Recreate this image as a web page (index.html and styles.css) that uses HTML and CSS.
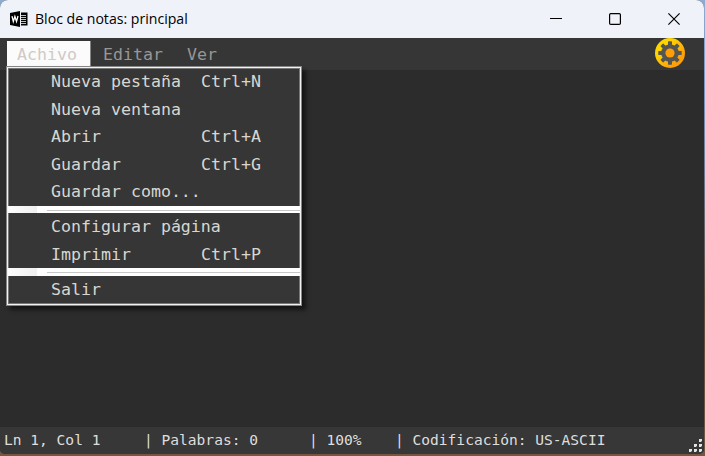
FILE: index.html
```
<!DOCTYPE html>
<html lang="es">
<head>
<meta charset="utf-8">
<title>Bloc de notas: principal</title>
<link rel="stylesheet" href="styles.css">
</head>
<body>
<div class="window">
  <header class="titlebar">
    <svg class="app-icon" width="18" height="16" viewBox="0 0 18 16">
      <path d="M0 2 10 0v16L0 14z" fill="#000"/>
      <path d="M11 1.5h6.5v13H11z" fill="#000"/>
      <path d="M11 4.5h5M11 6.5h5M11 8.5h5M11 10.5h5M11 12.5h5" stroke="#d4d7dd" stroke-width=".9"/>
      <path d="M2 5.2 3.3 10.5 4.9 5.5 6.5 10.5 8 5" fill="none" stroke="#fff" stroke-width="1.3"/>
    </svg>
    <h1 class="title">Bloc de notas: principal</h1>
    <div class="controls">
      <svg width="12" height="12" viewBox="0 0 12 12"><path d="M0 5.5h12" stroke="#000"/></svg>
      <svg width="12" height="12" viewBox="0 0 12 12"><rect x=".6" y=".6" width="10.8" height="10.8" rx="1.2" fill="none" stroke="#000" stroke-width="1.2"/></svg>
      <svg width="12" height="12" viewBox="0 0 12 12"><path d="m.4.4 11.2 11.2M11.6.4.4 11.6" stroke="#000" stroke-width="1.15"/></svg>
    </div>
  </header>
  <nav class="menubar">
    <span class="menu-item active">Achivo</span>
    <span class="menu-item">Editar</span>
    <span class="menu-item">Ver</span>
    <svg class="gear" width="30" height="30" viewBox="0 0 30 30">
      <defs><linearGradient id="gold" x1="0" y1="0" x2="1" y2="1"><stop offset=".3" stop-color="#ffd500"/><stop offset=".75" stop-color="#ff9f08"/></linearGradient></defs>
      <circle cx="15" cy="15" r="15" fill="url(#gold)"/>
      <g fill="#555551">
        <circle cx="15" cy="15" r="8.8"/>
        <g id="teeth"><rect x="13" y="3.3" width="4" height="23.4" rx=".6"/><rect x="3.3" y="13" width="23.4" height="4" rx=".6"/></g>
        <use href="#teeth" transform="rotate(45 15 15)"/>
      </g>
      <circle cx="15" cy="15" r="4.6" fill="#ff9f05"/>
    </svg>
  </nav>
  <main class="editor"></main>
  <footer class="status">
    <span class="position">Ln 1, Col 1</span>
    <span class="words">| Palabras: 0</span>
    <span class="zoom">| 100%</span>
    <span class="encoding">| Codificación: US-ASCII</span>
    <svg class="grip" width="15" height="15" viewBox="0 0 15 15" fill="#e4e4e4">
      <path d="M11 1h3v3h-3zM6 6h3v3H6zM11 6h3v3h-3zM1 11h3v3H1zM6 11h3v3H6zM11 11h3v3h-3z"/>
      <path d="M13 3h1v1h-1zM8 8h1v1H8zM13 8h1v1h-1zM3 13h1v1H3zM8 13h1v1H8zM13 13h1v1h-1z" fill="#777"/>
    </svg>
  </footer>
  <div class="dropdown">
    <div class="row"><span>Nueva pestaña</span><span>Ctrl+N</span></div>
    <div class="row"><span>Nueva ventana</span></div>
    <div class="row"><span>Abrir</span><span>Ctrl+A</span></div>
    <div class="row"><span>Guardar</span><span>Ctrl+G</span></div>
    <div class="row"><span>Guardar como...</span></div>
    <div class="separator"></div>
    <div class="row"><span>Configurar página</span></div>
    <div class="row"><span>Imprimir</span><span>Ctrl+P</span></div>
    <div class="separator"></div>
    <div class="row"><span>Salir</span></div>
  </div>
</div>
</body>
</html>
```

FILE: styles.css
```
* { box-sizing: border-box; }

body {
  margin: 0;
  width: 705px;
  height: 456px;
  overflow: hidden;
  background: linear-gradient(#8eabd2 0, #7892bd 100px, #62483a 300px, #745641);
}

.window {
  position: relative;
  display: flex;
  flex-direction: column;
  width: 704px;
  height: 454px;
  border-radius: 8px 8px 5px 5px;
  overflow: hidden;
  background: #2c2c2c;
  font-family: "DejaVu Sans Mono", monospace;
}

.titlebar {
  display: flex;
  align-items: center;
  height: 38px;
  padding: 0 24px 0 10px;
  background: #eff2f9;
}

.title {
  margin: 0 0 0 7px;
  font: 14.1px "Open Sans", sans-serif;
  line-height: 20px;
  color: #000;
  white-space: nowrap;
}

.controls {
  display: flex;
  gap: 47px;
  margin-left: auto;
}

.menubar {
  display: flex;
  align-items: flex-start;
  height: 32px;
  padding: 3px 19px 0 7px;
  background: #363636;
  font-size: 16.6px;
}

.menu-item {
  height: 27px;
  line-height: 27px;
  padding: 0 0 0 12px;
  color: #989795;
}

.menu-item.active {
  width: 84px;
  padding-left: 10px;
  border-right: 1px solid #858585;
  background: #fbfbfb;
  color: #cfcac7;
}

.menu-item:nth-child(3) { padding-left: 24px; }

.gear {
  margin: -3px 0 0 auto;
}

.editor { flex: 1; }

.status {
  display: flex;
  height: 27px;
  padding-left: 4px;
  background: #373737;
  color: #dedede;
  font-size: 14.57px;
  line-height: 26px;
  white-space: pre;
}

.position { width: 140px; }
.words { width: 165px; }
.zoom { width: 86px; }

.grip {
  align-self: flex-end;
  margin: 0 1px 1px auto;
}

.dropdown {
  position: absolute;
  left: 6px;
  top: 66px;
  width: 296px;
  height: 240px;
  padding: 1px 1px 0;
  border: 1px solid #858585;
  background: #363636;
  box-shadow: inset 0 0 0 1px #f2f2f2, inset 0 0 0 2px #777, 4px 4px 4px #0008;
  color: #d8d6d1;
  font-size: 16.6px;
}

.row {
  display: grid;
  grid-template-columns: 150px 1fr;
  height: 27.5px;
  padding-left: 43px;
  line-height: 27px;
  white-space: pre;
}

.separator {
  height: 7.5px;
  background:
    linear-gradient(#c6c6c6, #c6c6c6) 39px 4px / 100% 1px no-repeat,
    linear-gradient(90deg, #fdfdfd, #f0f0f0) 0 0 / 29px 100% no-repeat,
    #fff;
}
```
